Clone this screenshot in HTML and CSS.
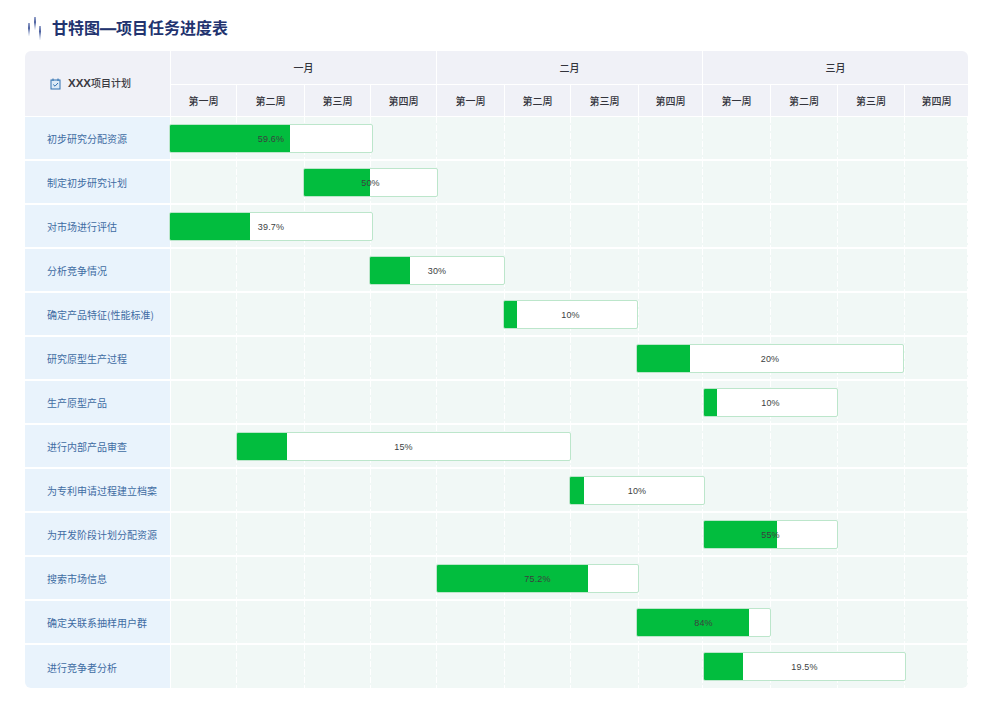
FILE: index.html
```html
<!DOCTYPE html>
<html lang="zh">
<head>
<meta charset="utf-8">
<title>甘特图—项目任务进度表</title>
<link rel="stylesheet" href="styles.css">
</head>
<body>
<header class="title-row">
  <svg class="title-icon" width="16" height="24" viewBox="0 0 16 24">
    <defs>
      <linearGradient id="fade" x1="0" y1="0" x2="0" y2="1">
        <stop offset="0" stop-color="#6c7db5" stop-opacity="0.7"/>
        <stop offset="0.4" stop-color="#4a5f9e"/>
        <stop offset="1" stop-color="#9fb0d6" stop-opacity="0.1"/>
      </linearGradient>
    </defs>
    <rect x="1" y="6" width="2" height="13" fill="url(#fade)"/>
    <rect x="7" y="0" width="2" height="13" fill="url(#fade)"/>
    <rect x="12" y="9" width="2" height="14" fill="url(#fade)"/>
  </svg>
  <h1 class="title">甘特图<span class="dash">—</span>项目任务进度表</h1>
</header>
<main class="gantt">
  <div class="head">
    <div class="plan-name">
      <svg class="plan-icon" width="11" height="12" viewBox="0 0 11 12">
        <rect x="1" y="2" width="9" height="9" fill="#dceaf7" stroke="#2f70b0" stroke-width="1"/>
        <path d="M3 0.5V3M8 0.5V3" stroke="#2f70b0" stroke-width="1"/>
        <path d="M3.2 6.5L5 8.2L8 5" fill="none" stroke="#2f70b0" stroke-width="1"/>
      </svg>
      <span><span class="latin">XXX</span>项目计划</span>
    </div>
    <div class="timeline-head">
      <div class="month m1">一月</div>
      <div class="month m2">二月</div>
      <div class="month m3">三月</div>
      <div class="week">第一周</div><div class="week">第二周</div><div class="week">第三周</div><div class="week">第四周</div>
      <div class="week">第一周</div><div class="week">第二周</div><div class="week">第三周</div><div class="week">第四周</div>
      <div class="week">第一周</div><div class="week">第二周</div><div class="week">第三周</div><div class="week last">第四周</div>
    </div>
  </div>
  <div id="rows"></div>
</main>
<script src="app.js"></script>
</body>
</html>
```

FILE: styles.css
```css
* { box-sizing: border-box; }
html, body { margin: 0; background: #fff; }
body {
  width: 996px;
  height: 710px;
  padding: 15px 28px 0 25px;
  font-family: "Noto Sans CJK SC", "Liberation Sans", sans-serif;
  overflow: hidden;
}
.title-row { display: flex; align-items: center; gap: 9px; height: 28px; margin-bottom: 8px; padding-left: 2px; }
.title-icon { flex: none; }
.title { margin: -2px 0 0; font-size: 16px; line-height: 28px; font-weight: 700; color: #22336f; }
.dash { font-family: "Liberation Sans", sans-serif; font-weight: 700; -webkit-text-stroke: 0.4px #22336f; }
.gantt {
  --weeks: 66px 68px 66px 66px 68px 66px 68px 64px 68px 67px 67px 63px;
  border-radius: 6px;
  overflow: hidden;
  width: 943px;
}
.head { display: flex; height: 66px; background: #f0f1f7; border-bottom: 1px solid #fff; }
.plan-name {
  width: 146px;
  flex: none;
  display: flex;
  align-items: center;
  gap: 7px;
  padding: 0 0 2px 25px;
  border-right: 1px solid #fff;
  font-size: 10px;
  font-weight: 500;
  color: #3a3a42;
}
.latin { font-family: "Liberation Sans", sans-serif; font-size: 11.5px; font-weight: 700; }
.plan-icon { margin-top: 2px; flex: none; }
.timeline-head { display: grid; grid-template-columns: var(--weeks); grid-template-rows: 34px 31px; }
.month, .week {
  display: flex;
  align-items: center;
  justify-content: center;
  font-size: 10px;
  font-weight: 500;
  color: #33343c;
  border-right: 1px solid #fff;
}
.month { grid-row: 1; border-bottom: 1px solid #fff; padding-bottom: 1px; }
.m1 { grid-column: 1 / 5; }
.m2 { grid-column: 5 / 9; }
.m3 { grid-column: 9 / 13; border-right: 0; }
.week { grid-row: 2; }
.week.last { border-right: 0; }
.row { display: flex; height: 44px; border-bottom: 2px solid #fff; }
.row:last-child { border-bottom: 0; height: 43px; }
.label {
  width: 146px;
  flex: none;
  display: flex;
  align-items: center;
  padding: 1px 0 0 22px;
  font-size: 10px;
  color: #3f6ca3;
  background: #e9f3fc;
  border-right: 1px solid #fff;
}
.track {
  position: relative;
  display: grid;
  grid-template-columns: var(--weeks);
  background: #f1f8f6;
  flex: 1;
}
.cell {
  background: repeating-linear-gradient(to bottom, #fff 0 6px, transparent 6px 8px) right top / 1px 100% no-repeat;
}
.cell:last-of-type { background: none; }
.bar {
  position: absolute;
  top: 7px;
  height: 29px;
  background: #fff;
  border: 1px solid #bce6cb;
  border-radius: 2px;
  overflow: hidden;
  display: flex;
  align-items: center;
  justify-content: center;
}
.fill { position: absolute; left: 0; top: 0; bottom: 0; background: #02bd3e; }
.pct { position: relative; font-family: "Liberation Sans", sans-serif; font-size: 9px; color: #3c3f3f; letter-spacing: 0.2px; }
```

FILE: app.js
```js
var tasks = [
  ["初步研究分配资源", -2, 204, 120, "59.6%"],
  ["制定初步研究计划", 132, 135, 66, "50%"],
  ["对市场进行评估", -2, 204, 80, "39.7%"],
  ["分析竞争情况", 198, 136, 40, "30%"],
  ["确定产品特征(性能标准)", 332, 135, 13, "10%"],
  ["研究原型生产过程", 465, 268, 53, "20%"],
  ["生产原型产品", 532, 135, 13, "10%"],
  ["进行内部产品审查", 65, 335, 50, "15%"],
  ["为专利申请过程建立档案", 398, 136, 14, "10%"],
  ["为开发阶段计划分配资源", 532, 135, 73, "55%"],
  ["搜索市场信息", 265, 203, 151, "75.2%"],
  ["确定关联系抽样用户群", 465, 135, 112, "84%"],
  ["进行竞争者分析", 532, 203, 39, "19.5%"]
];
var html = "";
tasks.forEach(function (t) {
  var cells = "";
  for (var i = 0; i < 12; i++) cells += '<div class="cell"></div>';
  html += '<div class="row"><div class="label">' + t[0] + '</div><div class="track">' + cells +
    '<div class="bar" style="left:' + t[1] + 'px;width:' + t[2] + 'px">' +
    '<div class="fill" style="width:' + t[3] + 'px"></div><span class="pct">' + t[4] + '</span></div></div></div>';
});
document.getElementById("rows").innerHTML = html;
```
